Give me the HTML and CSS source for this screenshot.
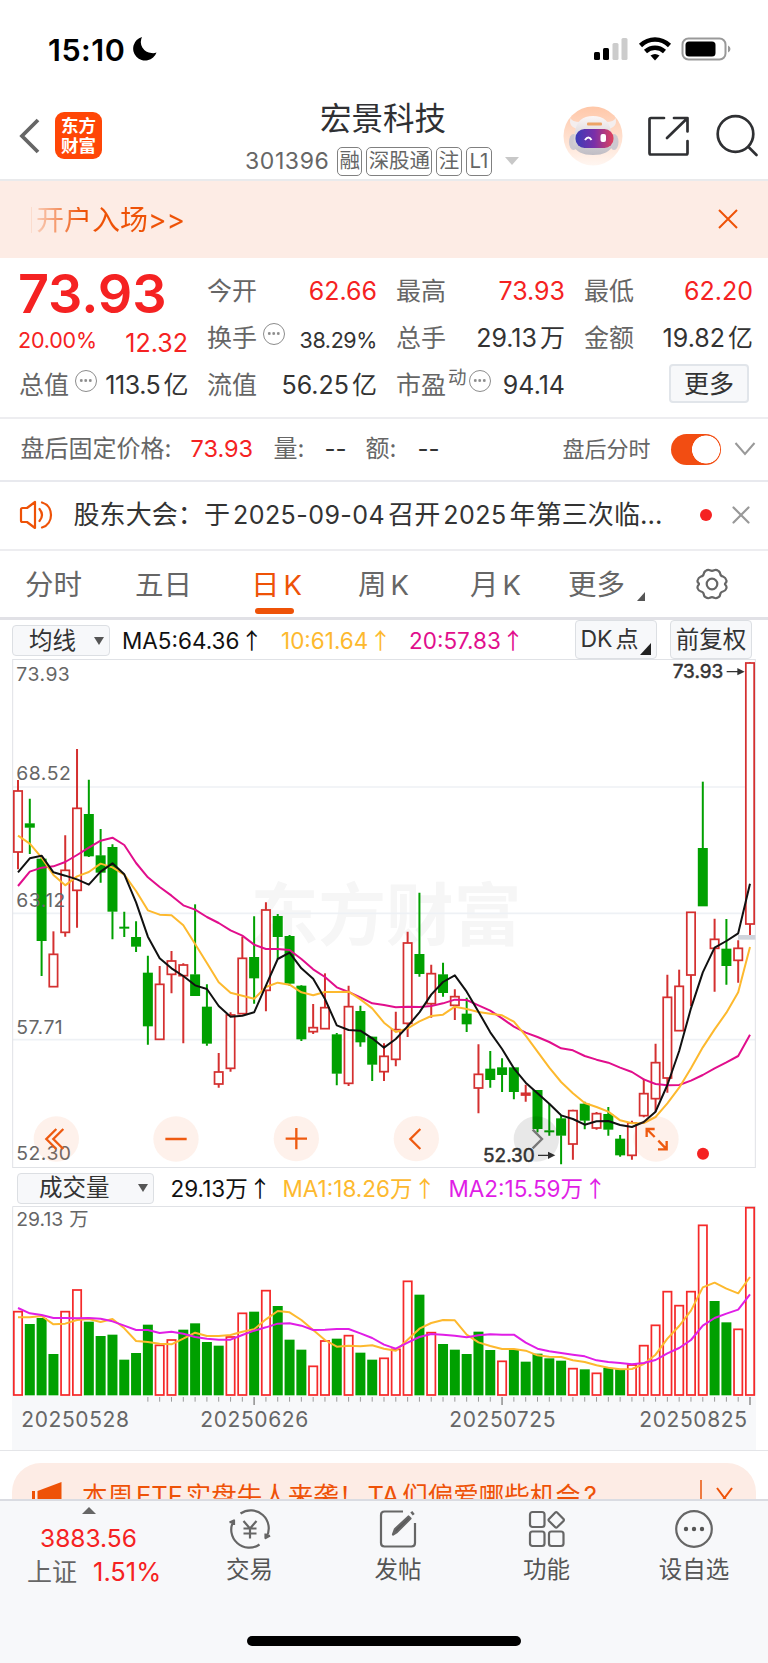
FILE: index.html
```html
<!DOCTYPE html>
<html lang="zh-CN">
<head>
<meta charset="utf-8">
<title>宏景科技 301396</title>
<link rel="stylesheet" href="styles.css">
</head>
<body>
<div class="phone">
  <div class="status">
    <span class="clock">15:10</span>
    <svg class="moon" width="24" height="24" viewBox="0 0 24 24"><path d="M9 0A12 12 0 1 0 23.500 15.500 Q21 16.500 18.500 16 A11 11 0 0 1 9 0Z"/></svg>
    <svg class="signals" width="140" height="26" viewBox="0 0 140 26">
      <rect x="0" y="15" width="6" height="8" rx="1.500"/><rect x="9" y="11" width="6" height="12" rx="1.500"/>
      <g fill="#ccc"><rect x="18.500" y="6" width="6" height="17" rx="1.500"/><rect x="27.500" y="1" width="6" height="22" rx="1.500"/></g>
      <g fill="none" stroke="#000" stroke-width="4.500"><path d="M46.500 8.500C55 .5 67 .5 75.500 8.500"/><path d="M51.500 14.500C57 9.500 65 9.500 70.500 14.500"/></g>
      <path d="M56.500 18.500Q61 15.500 65.500 18.500L61 23.500Z"/>
      <rect x="88.500" y="1.500" width="43" height="21" rx="6" fill="none" stroke="#999" stroke-width="2"/><rect x="91.500" y="4.500" width="30" height="15" rx="3.500"/><path d="M134 8.500q2.500 1 2.500 3.500t-2.500 3.500z" fill="#999"/>
    </svg>
  </div>

  <header class="head">
    <svg class="back" width="22" height="38" viewBox="0 0 22 38"><path d="M19 3L3 19L19 35"/></svg>
    <div class="logo"><span>东方</span><span>财富</span></div>
    <div class="title">
      <h1>宏景科技</h1>
      <div class="code"><span class="num">301396</span><b>融</b><b>深股通</b><b>注</b><b>L1</b><i></i></div>
    </div>
    <svg class="tools" width="200" height="62" viewBox="0 0 200 62">
      <defs>
        <linearGradient id="halo" x2="0" y2="1"><stop stop-color="#ffc7a8"/><stop offset="1" stop-color="#fff6f1"/></linearGradient>
        <linearGradient id="visor"><stop stop-color="#3b3cb8"/><stop offset=".5" stop-color="#7b2fa8"/><stop offset="1" stop-color="#e0425c"/></linearGradient>
        <linearGradient id="shell" x2="0" y2="1"><stop stop-color="#fbf6f6"/><stop offset="1" stop-color="#c0bdc4"/></linearGradient>
      </defs>
      <circle cx="30" cy="31" r="29.500" fill="url(#halo)"/>
      <path d="M15 24Q5 22 7.500 13Q9 17 17 17M45 24Q55 22 52.500 13Q51 17 43 17" fill="#f4eeee"/>
      <ellipse cx="10.500" cy="37" rx="4.500" ry="8" fill="#cdc9d0"/><ellipse cx="51" cy="37" rx="4.500" ry="8" fill="#cdc9d0"/>
      <path d="M12 27Q14 11 30 11T48 27L50 40Q46 50 30 50T10 40Z" fill="url(#shell)"/>
      <rect x="24" y="17.500" width="15" height="3" rx="1" fill="#eda467"/>
      <rect x="12.500" y="24" width="38" height="19" rx="9" fill="url(#visor)"/>
      <path d="M22 35q3.500-5 6.500 0" fill="none" stroke="#fff" stroke-width="2"/><rect x="37.500" y="29" width="5.500" height="8" rx="2" fill="#fff"/>
      <g fill="none" stroke="#2f3033" stroke-width="2.700" stroke-linecap="round" stroke-linejoin="round">
        <path d="M101 13H88q-1.500 0-1.500 1.500V48q0 1.500 1.500 1.500H123q1.500 0 1.500-1.500V36M111 13h13.500V26.500M123.500 14L104 33"/>
        <circle cx="172.500" cy="29" r="17.800"/><path d="M185.500 42L193.500 50"/>
      </g>
    </svg>
  </header>

  <div class="banner"><span class="scroll">开户入场&gt;&gt;</span><svg width="20" height="20" viewBox="0 0 20 20"><path d="M1 1L19 19M19 1L1 19"/></svg></div>

  <section class="quote">
    <div class="price">73.93</div>
    <div class="cell"><span>今开</span><em class="up">62.66</em></div>
    <div class="cell"><span>最高</span><em class="up">73.93</em></div>
    <div class="cell"><span>最低</span><em class="up">62.20</em></div>
    <div class="cell chg"><em class="up pct">20.00%</em><em class="up">12.32</em></div>
    <div class="cell"><span>换手</span><u></u><em class="small">38.29%</em></div>
    <div class="cell"><span>总手</span><em>29.13<s>万</s></em></div>
    <div class="cell"><span>金额</span><em>19.82<s>亿</s></em></div>
    <div class="cell"><span>总值</span><u></u><em>113.5<s>亿</s></em></div>
    <div class="cell"><span>流值</span><em>56.25<s>亿</s></em></div>
    <div class="cell"><span>市盈</span><sup>动</sup><u class="near"></u><em>94.14</em></div>
    <div class="cell end"><button>更多</button></div>
  </section>

  <div class="after">
    <span>盘后固定价格:</span><span class="up">73.93</span><span>量:</span><span class="dark">--</span><span>额:</span><span class="dark">--</span><span class="fs">盘后分时</span><div class="toggle"></div>
    <svg width="22" height="16" viewBox="0 0 22 16"><path d="M1.500 2L11 13L20.500 2"/></svg>
  </div>

  <div class="notice">
    <svg width="36" height="30" viewBox="0 0 36 30"><path d="M2 9.500Q2 8 3.500 8H8L16 2V28L8 22H3.500Q2 22 2 20.500Z"/><path d="M20.500 9Q25.500 15 20.500 21M23 2.500C35 6 35 24 23 27.500"/></svg>
    <span class="msg">股东大会：于<q>2025-09-04</q>召开<q>2025</q>年第三次临…</span>
    <i class="dot"></i>
    <svg class="close" width="18" height="18" viewBox="0 0 18 18"><path d="M1.500 1.500L16.500 16.500M16.500 1.500L1.500 16.500"/></svg>
  </div>

  <nav class="tabs">
    <span>分时</span><span>五日</span><span class="on">日<q>K</q></span><span>周<q>K</q></span><span>月<q>K</q></span><span>更多<i></i></span>
    <svg width="34" height="32" viewBox="0 0 34 32"><path d="M10.500 3Q13 1 15 2.300Q17 3.500 19 2.300Q21 1 23.500 3Q25 4 25.300 6Q25.600 8 28 8.500Q30.500 9.500 31.300 12Q32 14 30.500 15Q29.500 16 30.500 17Q32 18.500 31.300 20.500Q30.500 23 28 23.500Q25.600 24 25.300 26Q25 28.500 23.500 29.200Q21 31 19 29.700Q17 28.500 15 29.700Q13 31 10.500 29.200Q9 28.500 8.700 26Q8.400 24 6 23.500Q3.500 23 2.700 20.500Q2 18.500 3.500 17Q4.500 16 3.500 15Q2 14 2.700 12Q3.500 9.500 6 8.500Q8.400 8 8.700 6Q9 4 10.500 3Z"/><circle cx="17" cy="16" r="5.300"/></svg>
  </nav>

  <div class="ind">
    <div class="pick"><span>均线</span><i></i></div>
    <span class="k">MA5:64.36<a>↑</a></span><span class="o">10:61.64<a>↑</a></span><span class="p">20:57.83<a>↑</a></span>
    <div class="btn dk">DK<s>点</s><i></i></div><div class="btn">前复权</div>
  </div>

  <svg class="chart" id="kline" width="768" height="509" viewBox="0 12 2304 1527">
    <text class="mark" x="752" y="855">东方财富</text>
    <path class="grid" d="M38 396H2266M38 775H2266M38 1154H2266"/>
    <rect class="frame" x="38" y="13.500" width="2228" height="1524"/>
    <g id="candles"></g>
    <rect x="2214" y="840" width="52" height="14" fill="#cfd4dc"/>
    <g id="averages"></g>
    <g class="ylab"><text x="49" y="77">73.93</text><text x="49" y="376">68.52</text><text x="49" y="756">63.12</text><text x="49" y="1136">57.71</text><text x="49" y="1516">52.30</text></g>
    <g class="ends"><text x="2018" y="70">73.93</text><text x="1449" y="1522">52.30</text><path d="M2180 50H2224M1614 1501H1658"/><path d="M2212 39L2234 50L2212 61ZM1644 1490L1666 1501L1644 1512Z" fill="#333" stroke="none"/></g>
    <g class="knobs"><circle cx="169" cy="1452" r="68"/><circle cx="528" cy="1452" r="68"/><circle cx="889" cy="1451" r="68"/><circle cx="1249" cy="1451" r="68"/><circle cx="1968" cy="1452" r="68"/><circle class="off" cx="1609" cy="1452" r="68"/></g>
    <path class="glyph" d="M169 1422L139 1452L169 1482M190 1422L160 1452L190 1482M496 1452H560M857 1451H921M889 1419V1483M1261 1422L1231 1452L1261 1482M1964 1446L1940 1422M1940 1446V1422H1964M1975 1457L2000 1483M2000 1458V1483H1974"/>
    <path class="glyph grey" d="M1598 1424L1626 1452L1598 1480"/>
    <circle cx="2109" cy="1496" r="18" fill="#f52222"/>
  </svg>

  <div class="volhead">
    <div class="pick wide"><span>成交量</span><i></i></div>
    <span class="k">29.13万<a>↑</a></span><span class="o">MA1:18.26万<a>↑</a></span><span class="m">MA2:15.59万<a>↑</a></span>
  </div>

  <svg class="chart" id="volume" width="768" height="244" viewBox="0 123 2304 732">
    <rect x="36" y="692" width="2232" height="163" fill="#f7f8fa"/>
    <path class="frame" d="M38 692V124.500H2266V692"/>
    <text class="vlab" x="49" y="184">29.13</text><text class="vlab" x="208" y="184">万</text>
    <g id="bars"></g>
    <g class="dates"><text x="64" y="786">20250528</text><text x="601" y="786">20250626</text><text x="1348" y="786">20250725</text><text x="1918" y="786">20250825</text></g>
  </svg>

  <div class="promo"><div class="card">
    <svg width="32" height="28" viewBox="0 0 32 28"><path d="M0 9h3v19H0zM5.500 9L29.500 0V28H5.500z"/></svg>
    <span>本周<q>ETF</q>实盘牛人来袭！<q>TA</q>们偏爱哪些机会<q>?</q></span><b></b>
    <svg class="x" width="17" height="26" viewBox="0 0 17 26"><path d="M1 1L16 21M16 1L1 21"/></svg>
  </div></div>

  <footer class="dock">
    <div class="index"><i></i><strong>3883.56</strong><p>上证<em>1.51%</em></p></div>
    <div class="item"><svg width="44" height="40" viewBox="0 0 44 40"><path d="M12.500 4.500A18 18 0 0 1 38.500 28M31.500 35.500A18 18 0 0 1 5.500 12M1.500 13.500L6 11.500V16M42 26.500L37.500 29V24.500"/><path d="M15.500 12L22 19.500L28.500 12M22 19.500V29.500M15.500 19.500H28.500M15.500 24.500H28.500"/></svg><span>交易</span></div>
    <div class="item"><svg width="44" height="40" viewBox="0 0 44 40"><path d="M27 2.500H8.500Q5 2.500 5 6V34Q5 37.500 8.500 37.500H35.500Q39 37.500 39 34V14"/><path d="M17 25.500L19 20L32.500 7.500L34.500 9.500L21 23Z" fill="#555"/><path d="M35.500 5L37.500 3.500" stroke-width="4"/></svg><span>发帖</span></div>
    <div class="item"><svg width="44" height="40" viewBox="0 0 44 40"><rect x="5" y="3" width="14.500" height="15" rx="2.500"/><rect x="5" y="22.500" width="14.500" height="14.500" rx="2.500"/><rect x="24" y="22.500" width="14.500" height="14.500" rx="2.500"/><path d="M30.300 3.500Q31.200 2.600 32.100 3.500L38.500 10Q39.300 11 38.500 12L32.100 18.300Q31.200 19.200 30.300 18.300L24 12Q23.100 11 24 10Z"/></svg><span>功能</span></div>
    <div class="item"><svg width="44" height="40" viewBox="0 0 44 40"><circle cx="22" cy="20" r="17.800"/><g fill="#555" stroke="none"><circle cx="14" cy="20" r="2.200"/><circle cx="22" cy="20" r="2.200"/><circle cx="30" cy="20" r="2.200"/></g></svg><span>设自选</span></div>
    <div class="home"></div>
  </footer>
</div>
<script src="chart.js"></script>
</body>
</html>
```
FILE: styles.css
```css
* { box-sizing: border-box; }
body { margin: 0; background: #fff; font-family: Inter, "Noto Sans CJK SC", sans-serif; color: #333; }
h1, p { margin: 0; font-weight: 400; }
em, i { font-style: normal; }
s, u { text-decoration: none; }
q { quotes: none; }
.phone { width: 768px; height: 1663px; overflow: hidden; display: flex; flex-direction: column; line-height: 1; white-space: nowrap; }
.phone > * { flex: none; }
.up { color: #f52222; }

.status { height: 98px; display: flex; align-items: center; padding: 2px 34px 0 48px; }
.clock { font-size: 30.500px; font-weight: 600; color: #000; width: 85px; letter-spacing: .5px; }
.moon { margin-top: -2px; }
.signals { margin-left: auto; }

.head { height: 83px; border-bottom: 2px solid #e9eaec; display: grid; grid-template-columns: 55px 47px 1fr 205px; }
.back { margin: 19px 0 0 19px; fill: none; stroke: #666; stroke-width: 3.800; }
.logo { margin-top: 14px; width: 47px; height: 47px; border-radius: 9px; background: #ff4606; color: #fff; font-weight: 700; font-size: 17.500px; display: flex; flex-direction: column; align-items: center; justify-content: center; gap: 2px; line-height: 18px; }
.title { padding-left: 143px; }
.title h1 { font-size: 31.500px; line-height: 40px; padding-left: 75px; margin-top: 1px; color: #2f3033; }
.code { display: flex; align-items: center; height: 32px; margin-top: 6px; color: #666; }
.code .num { font-size: 23px; width: 92px; letter-spacing: .6px; }
.code b { font-weight: 400; font-size: 20.500px; height: 29px; line-height: 26px; border: 1.500px solid #808080; border-radius: 5px; padding: 0 1.500px; margin-right: 4px; letter-spacing: -.2px; }
.code b:nth-of-type(4) { padding: 0 3px; }
.code i { margin-left: 9px; border: 7px solid transparent; border-top: 8px solid #c8c8c8; border-bottom: 0; }
.tools { margin: 7px 0 0 -.5px; }

.banner { height: 77px; background: #fdece5; display: flex; justify-content: space-between; align-items: center; padding: 0 30px 0 31px; }
.scroll { font-size: 28px; border-left: 1px solid #fbdccd; padding-left: 4px; background: linear-gradient(90deg, #fbd9c8, #ee5207 52px); -webkit-background-clip: text; background-clip: text; color: transparent; line-height: 26px; }
.banner svg { fill: none; stroke: #ee5207; stroke-width: 2; margin-top: -1px; }

.quote { height: 161px; border-bottom: 2px solid #ededf0; display: grid; grid-template-columns: 169px 170px 169px 169px; column-gap: 19px; grid-template-rows: 47px 47px 47px; padding: 10px 0 0 19px; }
.price { color: #f52222; font-size: 54px; font-weight: 600; line-height: 54px; letter-spacing: -.1px; margin: -1px 0 0 -1px; }
.cell { display: flex; align-items: center; color: #666; font-size: 25px; }
.cell em { margin-left: auto; color: #333; font-size: 25px; }
.cell em.up { color: #f52222; }
.cell em s { margin-left: 3px; font-size: 25px; }
.cell em.small { font-size: 21.500px; padding-top: 5px; }
.chg { padding-top: 9px; }
.cell em.pct { margin-left: -1px; font-size: 21.500px; margin-top: -4px; letter-spacing: -.2px; }
.cell u { width: 22px; height: 22px; border: 1.800px solid #8c8c8c; border-radius: 50%; margin: -10px 0 0 6px; position: relative; flex: none; }
.cell u::before { content: ""; position: absolute; left: 3px; top: 8px; width: 13px; height: 3px; background: radial-gradient(circle, #8c8c8c 1.200px, transparent 1.600px) 0 0 / 4.500px 3px; }
.cell u + em { letter-spacing: -.4px; }
.cell sup { font-size: 18.500px; margin: -16px 0 0 2px; }
.cell u.near { margin-left: 2px; }
.cell u.near + em { letter-spacing: 0; }
.end { justify-content: flex-end; padding-right: 4px; }
.cell button { width: 80px; height: 39px; border: 2px solid #e1e5ea; border-radius: 4px; background: #f7f8fa; font: 25px/32px Inter, "Noto Sans CJK SC", sans-serif; color: #333; padding: 0; margin-top: -4px; }

.after { height: 63px; border-bottom: 2px solid #e8e9ee; display: grid; grid-template-columns: 170px 83px 51px 41px 52px 145px 108px 63px 22px; align-items: center; padding: 0 0 1px 20.500px; font-size: 24px; color: #666; }
.after .up { font-size: 23.500px; }
.after .dark { color: #333; }
.after .fs { font-size: 22px; }
.toggle { width: 50px; height: 31px; border-radius: 16px; background: radial-gradient(circle at 35px 15.500px, #fff 13.700px, #f24d12 14.300px); }
.after svg { fill: none; stroke: #999; stroke-width: 2; }

.notice { height: 69px; border-bottom: 2px solid #ededf0; display: grid; grid-template-columns: 55px 626px 32px 18px; align-items: center; padding: 0 0 1px 18.500px; }
.notice svg { fill: none; stroke: #ee5207; stroke-width: 2.200; stroke-linecap: round; stroke-linejoin: round; }
.notice svg.close { stroke: #999; }
.msg { font-size: 26px; letter-spacing: .08px; line-height: 36px; }
.msg q { margin: 0 3px; font-size: 25px; letter-spacing: .45px; }
.dot { width: 12px; height: 12px; border-radius: 50%; background: #f52222; }

.tabs { height: 69px; border-bottom: 3px solid #e1e1e6; display: grid; grid-template-columns: 110px 116px 107px 112px 98px 127px 34px; align-items: center; padding-left: 25px; font-size: 28.500px; color: #666; }
.tabs span { line-height: 68px; height: 66px; position: relative; }
.tabs q { margin-left: 4px; font-size: 27.500px; }
.tabs .on { color: #ee5207; }
.tabs .on::after { content: ""; position: absolute; left: 4px; bottom: 3px; width: 39px; height: 6px; border-radius: 3px; background: #ee5207; }
.tabs i { position: absolute; left: 69px; top: 41px; border-bottom: 9px solid #555; border-left: 8px solid transparent; }
.tabs svg { fill: none; stroke: #666; stroke-width: 2.200; }

.ind, .volhead { display: grid; align-items: center; font-size: 22.500px; }
.ind { height: 39px; grid-template-columns: 110px 159px 128px 166px 95px 82px; padding-left: 12px; padding-top: 2px; }
.pick { width: 98px; height: 31px; border: 1.500px solid #dcdfe3; border-radius: 4px; background: #f7f8fa; display: flex; align-items: center; justify-content: space-between; padding: 0 5px 0 16px; font-size: 23.500px; }
.pick i { border: 5px solid transparent; border-top: 8px solid #555; border-bottom: 0; }
.k { color: #111; } .o { color: #fdb92e; } .p { color: #e10e8c; } .m { color: #e01ee6; }
.ind a, .volhead a { display: inline-block; width: 20px; margin-left: 1px; font-family: "Noto Sans CJK SC", sans-serif; }
.btn { height: 39px; margin-top: -2px; width: 82px; border: 1.500px solid #dcdfe3; border-radius: 4px; background: #f7f8fa; font-size: 23.500px; line-height: 37px; text-align: center; position: relative; }
.dk { text-align: left; padding-left: 4.500px; font-size: 23px; }
.dk s { margin-left: 3px; }
.dk i { position: absolute; right: 5px; bottom: 3px; border-bottom: 12px solid #222; border-left: 11px solid transparent; }

.chart { display: block; }
.grid { stroke: #eef1f5; stroke-width: 5; }
.frame { fill: none; stroke: #e0e2e6; stroke-width: 3; }
.mark { font-size: 203px; font-weight: 700; fill: #f6f6f6; }
.ylab { font-size: 58px; fill: #666; letter-spacing: 1.500px; }
.ends { font-size: 57px; fill: #333; stroke: #333; stroke-width: 4; }
.ends text { stroke-width: 1.500; }
.knobs { fill: rgba(245, 120, 60, .1); }
.knobs .off { fill: rgba(0, 0, 0, .09); }
.glyph { fill: none; stroke: #ee5a10; stroke-width: 7; }
.glyph.grey { stroke: #777; }
.vlab { font-size: 58px; fill: #666; }
.dates { font-size: 63px; fill: #666; letter-spacing: 1.800px; }

.volhead { height: 38px; grid-template-columns: 154px 112px 166px 160px; padding-left: 17px; padding-top: 2px; }
.volhead > span { margin-left: -.5px; }
.wide { width: 137px; padding-left: 21px; }

.promo { height: 49px; padding: 12px 12px 0; border-top: 1.500px solid #e4e5e8; overflow: hidden; }
.card { height: 70px; border-radius: 29px; background: #fdece5; display: grid; grid-template-columns: 50px 618px 16px 17px; align-items: start; padding: 19px 0 0 20px; font-size: 25.500px; color: #ee5207; }
.card span { line-height: 36px; margin-top: -4px; }
.card q { margin: 0 3px; }
.card svg { fill: #ee5207; }
.card svg.x { fill: none; stroke: #ee5207; stroke-width: 2; margin-top: 5px; }
.card b { width: 2px; height: 40px; margin-top: -2px; background: #ee7a40; }

.dock { height: 165px; border-top: 2px solid #dadce2; background: #f7f8fa; display: grid; grid-template-columns: 176px 148px 149px 148px 147px; grid-template-rows: 134px 1fr; }
.index { padding: 6px 0 0 28px; font-size: 23.500px; }
.index i { display: block; width: 14px; margin-left: 54px; border: 7px solid transparent; border-bottom: 7px solid #666; border-top: 0; }
.index strong { display: block; font-weight: 400; color: #f52222; margin: 12px 0 0 12px; line-height: 24px; font-size: 24.500px; }
.index p { color: #666; margin: 9px 0 0 -1px; font-size: 25px; line-height: 26px; }
.index em { color: #f52222; margin-left: 16px; font-size: 25.500px; }
.item { display: flex; flex-direction: column; align-items: center; padding: 8px 1px 0 0; gap: 6px; color: #555; font-size: 23.500px; line-height: 30px; }
.item svg { fill: none; stroke: #666; stroke-width: 2.200; stroke-linejoin: round; }
.home { grid-column: 1 / -1; justify-self: center; width: 274px; height: 10px; border-radius: 5px; background: #000; margin-top: 1px; }
```
FILE: chart.js
```javascript
// Vertical values are thirds of a pixel; each candle is [high, bodyTop, bodyBottom, low].
const candles = [
  [375,408,591,643],[431,506,517,597],[605,612,857,963],[829,898,995,995],[541,646,832,845],[282,460,706,818],[374,478,603,606],[522,602,652,683],[568,577,769,853],[770,816,820,846],
  [799,847,874,891],[902,954,1113,1169],[933,988,1153,1153],[888,918,958,1015],[925,930,962,1165],[748,959,1022,1022],[988,1056,1165,1172],[1194,1251,1287,1298],[1072,1080,1240,1250],[845,910,1076,1076],
  [784,907,969,1046],[742,765,1006,1069],[777,784,845,912],[840,844,985,993],[991,993,1152,1158],[1047,1118,1130,1137],[955,1058,1121,1121],[1134,1139,1255,1291],[992,1055,1285,1293],[1052,1069,1161,1175],
  [1145,1146,1228,1278],[1165,1204,1250,1278],[1070,1124,1213,1234],[830,864,1105,1146],[713,898,956,965],[929,956,1046,1088],[923,959,1013,1025],[1003,1025,1051,1095],[1028,1077,1107,1131],[1168,1258,1299,1375],
  [1188,1242,1274,1298],[1210,1238,1259,1311],[1237,1238,1310,1333],[1289,1315,1320,1340],[1306,1306,1421,1432],[1346,1427,1431,1442],[1382,1391,1441,1528],[1364,1367,1467,1514],[1340,1347,1396,1423],[1371,1376,1419,1424],
  [1356,1378,1423,1442],[1440,1452,1500,1505],[1397,1404,1501,1514],[1271,1316,1382,1387],[1166,1223,1331,1370],[959,1027,1269,1313],[944,994,1127,1127],[771,772,960,1053],[380,580,753,753],[791,853,880,1010],
  [792,882,932,989],[856,880,916,983],[22,24,807,840]
];
const candleColors = "RGGRRRGGGGGGRRRGGRRRGRGGGRRGRGGRRRGRGRGRGGGRGGGRGRGGRRRRRRGRGRR";
const ma5 = [652,610,602,652,662,673,689,650,625,658,742,845,910,940,963,991,1002,1053,1085,1082,1072,992,912,893,940,971,1032,1111,1125,1127,1150,1178,1152,1114,1072,1019,981,961,1010,1070,1132,1182,1240,1283,1315,1346,1381,1392,1409,1399,1398,1410,1416,1401,1370,1290,1188,1060,952,878,858,835,686];
const ma10 = [542,566,608,660,691,664,651,626,637,659,708,766,779,781,811,867,924,982,1013,1022,1031,996,983,989,1012,1021,1011,1011,1010,1033,1060,1103,1131,1120,1099,1083,1079,1055,1062,1071,1076,1081,1100,1142,1190,1238,1281,1315,1344,1356,1370,1396,1405,1404,1386,1345,1298,1240,1177,1123,1073,1012,876];
const ma20 = [693,650,638,634,621,600,578,557,548,570,624,667,696,722,751,764,786,804,826,842,869,882,882,885,912,943,966,997,1011,1027,1045,1050,1057,1055,1056,1053,1045,1034,1035,1051,1067,1090,1115,1133,1146,1161,1180,1186,1203,1214,1223,1238,1251,1273,1287,1291,1290,1277,1260,1240,1222,1203,1139];
const volumes = [440,478,460,568,440,375,471,514,510,585,565,480,541,525,495,476,532,543,516,445,441,377,424,525,555,604,528,522,512,564,585,580,553,349,390,503,538,555,568,501,556,589,555,591,567,581,588,611,614,625,610,614,600,542,481,380,422,380,181,409,473,493,128];
const volumeColors = "RGGGRRGGGGGGRRGGGGRRGRGGGRRGRGGRRRGRGGGGGRGGGGGRGRGGRRRRRRRGGRR";
const vol5 = [457,457,453,478,476,465,462,471,462,490,528,531,536,538,521,503,513,513,510,500,493,463,438,442,465,495,525,545,542,544,541,551,557,524,491,474,465,466,509,532,543,552,552,557,571,575,576,586,591,601,608,613,612,597,569,521,483,437,367,353,371,385,336];
const vol10 = [429,445,450,459,459,460,459,461,469,482,495,495,504,500,506,516,521,524,524,510,497,487,476,475,482,495,494,492,492,505,519,539,551,533,516,507,509,512,517,511,508,509,509,533,551,559,564,569,574,586,591,594,598,594,585,565,549,525,482,459,446,434,388];

const x = i => +(54 + 35.42 * i).toFixed(1);
const line = (values, color) =>
  `<polyline fill="none" stroke="${color}" stroke-width="6" stroke-linejoin="round" points="${values.map((v, i) => x(i) + "," + v).join(" ")}"/>`;

const box = (i, top, bottom, color, red) => color === "R"
  ? `<rect x="${x(i) - 12.5}" y="${top}" width="25" height="${Math.max(bottom - top, 1)}" fill="#fff" stroke="${red}" stroke-width="5.200"/>`
  : `<rect x="${x(i) - 15}" y="${top - 1}" width="30" height="${bottom - top + 2}" fill="#00a000"/>`;

document.getElementById("candles").innerHTML = candles.map(([high, top, bottom, low], i) => {
  const color = candleColors[i];
  const wick = `<path d="M${x(i)} ${high}V${top}M${x(i)} ${bottom}V${low}" stroke="${color === "R" ? "#d43030" : "#00a000"}" stroke-width="6"/>`;
  return wick + box(i, top, bottom, color, "#d43030");
}).join("");

document.getElementById("averages").innerHTML = line(ma20, "#e10e8c") + line(ma10, "#fdb92e") + line(ma5, "#111");

let bars = volumes.map((top, i) => box(i, top, 690, volumeColors[i], "#f52a2a")).join("");
for (let i = 11; i < 63; i++) {
  const major = (i - 20) % 21 === 0;
  bars += `<path d="M${x(i)} 696V${major ? 720 : 710}" stroke="#999" stroke-width="${major ? 5 : 3}"/>`;
}
document.getElementById("bars").innerHTML = bars + line(vol5, "#fdb92e") + line(vol10, "#e01ee6");
```
